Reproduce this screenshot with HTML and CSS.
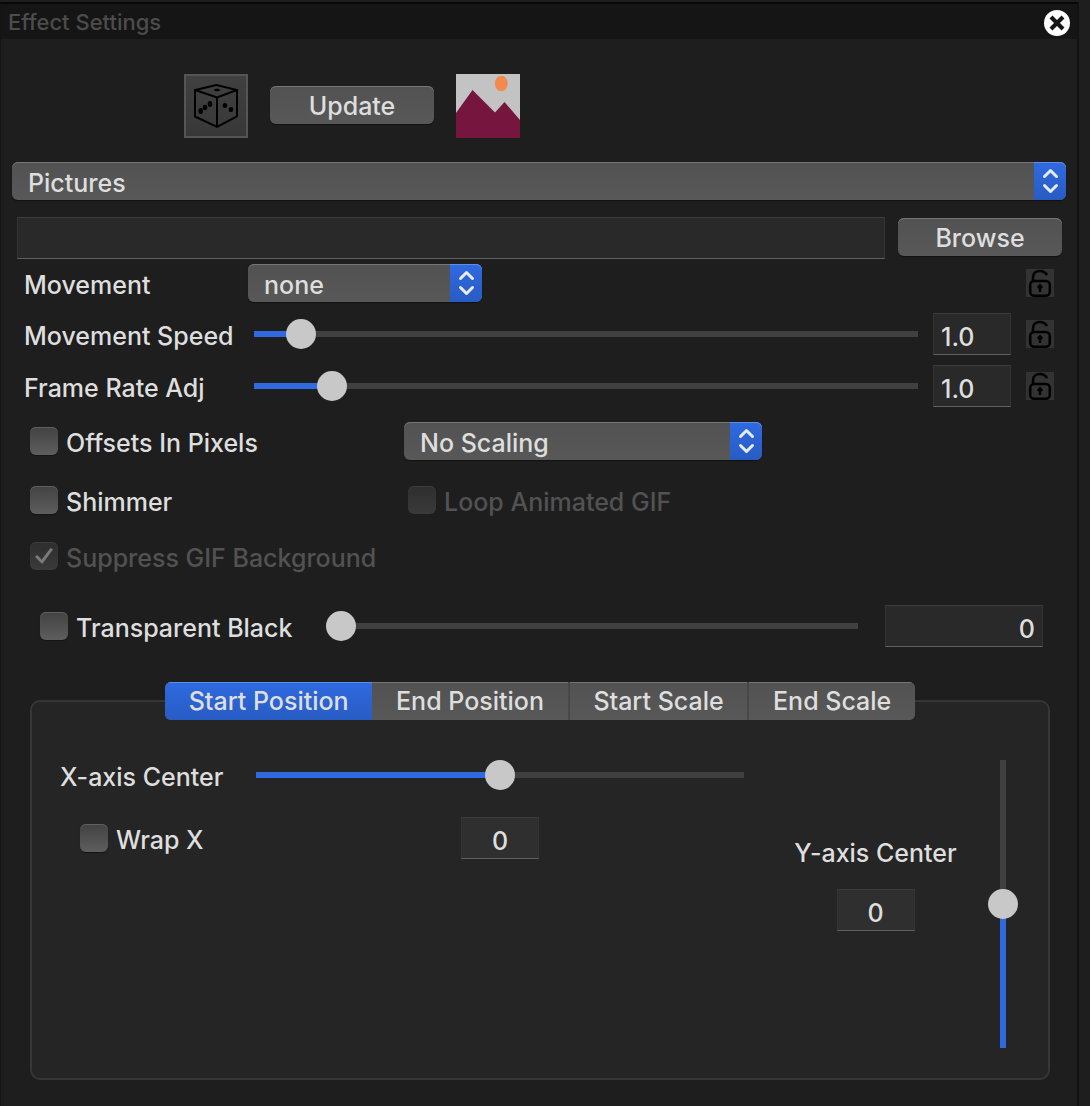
FILE: index.html
```html
<!DOCTYPE html>
<html lang="en">
<head>
<meta charset="utf-8">
<title>Effect Settings</title>
<link rel="stylesheet" href="styles.css">
</head>
<body>
<svg class="sprite" aria-hidden="true">
  <symbol id="chevrons" viewBox="0 0 32 38">
    <path d="M10.500 14.500 16.500 8.500 22.500 14.500M10.500 23.500 16.500 29.500 22.500 23.500" fill="none" stroke="#e6ecf8" stroke-width="3" stroke-linecap="round" stroke-linejoin="round"/>
  </symbol>
  <symbol id="lock" viewBox="0 0 28 28">
    <path d="M7 12V8.500C7 4 10 2 14 2C17.500 2 19.500 3.500 21 6" fill="none" stroke="#000" stroke-width="2.600"/>
    <rect x="4.200" y="12" width="19.600" height="14.700" rx="4" fill="none" stroke="#000" stroke-width="2.600"/>
    <path d="M14 14.500 17 18 15.200 20V23H12.800V20L11 18Z"/>
  </symbol>
</svg>

<main class="window">
  <header class="titlebar">
    <h1 class="title">Effect Settings</h1>
    <button class="close" type="button" aria-label="Close">
      <svg viewBox="0 0 26 26" width="26" height="26"><circle cx="13" cy="13" r="13" fill="#fff"/><path d="M7 7 19 19M19 7 7 19" stroke="#151515" stroke-width="4.200"/></svg>
    </button>
  </header>

  <form class="settings">
    <div class="toolbar">
      <button class="dice" type="button" aria-label="Randomize">
        <svg viewBox="0 0 64 64" width="64" height="64">
          <path d="M32.500 11 11 16V42.500L33 53 53 42.500V16ZM11 16 33 23.500 53 16M33 23.500V53" fill="none" stroke="#000" stroke-width="2"/>
          <ellipse cx="33" cy="16" rx="3" ry="1.200"/>
          <ellipse cx="16.700" cy="37" rx="2.300" ry="2.900"/>
          <ellipse cx="21" cy="33.500" rx="2.300" ry="2.700"/>
          <ellipse cx="26" cy="30" rx="2.300" ry="2.900"/>
          <ellipse cx="41" cy="31.500" rx="2.300" ry="2.600"/>
          <ellipse cx="47" cy="35.500" rx="2.300" ry="2.600"/>
        </svg>
      </button>
      <button class="button" type="button">Update</button>
      <svg class="picture" viewBox="0 0 64 64" width="64" height="64" role="img" aria-label="Pictures effect">
        <path d="M0 0H64V64H0Z" fill="#c3c3c3"/>
        <ellipse cx="45.300" cy="9.500" rx="6.500" ry="7.700" fill="#f28a50"/>
        <path d="M0 39 16.500 16 39 38.500 48.500 28 64 46V64H0Z" fill="#76163f"/>
      </svg>
    </div>

    <div class="popup popup-effect">
      <select aria-label="Effect"><option>Pictures</option></select>
      <svg><use href="#chevrons"/></svg>
    </div>

    <div class="file-row">
      <input class="field" type="text" aria-label="Picture file">
      <button class="button" type="button">Browse</button>
    </div>

    <div class="param param-first">
      <label class="name" for="movement">Movement</label>
      <div class="popup popup-movement">
        <select id="movement"><option>none</option></select>
        <svg><use href="#chevrons"/></svg>
      </div>
      <button class="lock" type="button" aria-label="Lock movement"><svg><use href="#lock"/></svg></button>
    </div>
    <div class="param">
      <label class="name" for="speed">Movement Speed</label>
      <input class="slider" id="speed" type="range" min="0" max="20" value="1" style="--fill: 5%">
      <input class="field field-small" type="text" value="1.0" aria-label="Movement speed value">
      <button class="lock" type="button" aria-label="Lock movement speed"><svg><use href="#lock"/></svg></button>
    </div>
    <div class="param">
      <label class="name" for="rate">Frame Rate Adj</label>
      <input class="slider" id="rate" type="range" min="0" max="10" value="1" style="--fill: 10%">
      <input class="field field-small" type="text" value="1.0" aria-label="Frame rate value">
      <button class="lock" type="button" aria-label="Lock frame rate"><svg><use href="#lock"/></svg></button>
    </div>

    <div class="options">
      <label class="check"><input type="checkbox"><span>Offsets In Pixels</span></label>
      <div class="popup popup-scaling">
        <select aria-label="Scaling"><option>No Scaling</option></select>
        <svg><use href="#chevrons"/></svg>
      </div>
      <label class="check"><input type="checkbox"><span>Shimmer</span></label>
      <label class="check check-loop"><input type="checkbox" disabled><span>Loop Animated GIF</span></label>
      <label class="check"><input type="checkbox" checked disabled><span>Suppress GIF Background</span></label>
    </div>

    <div class="transparent">
      <label class="check"><input type="checkbox"><span>Transparent Black</span></label>
      <input class="slider" type="range" min="0" max="300" value="0" style="--fill: 0%" aria-label="Transparent black level">
      <input class="field field-wide" type="text" value="0" aria-label="Transparent black value">
    </div>

    <section class="panel">
      <div class="tabs" role="tablist">
        <button class="tab tab-active" type="button" role="tab" aria-selected="true">Start Position</button>
        <button class="tab" type="button" role="tab" aria-selected="false">End Position</button>
        <button class="tab" type="button" role="tab" aria-selected="false">Start Scale</button>
        <button class="tab" type="button" role="tab" aria-selected="false">End Scale</button>
      </div>
      <div class="position">
        <div class="x-axis">
          <label class="name" for="xcenter">X-axis Center</label>
          <input class="slider" id="xcenter" type="range" min="-100" max="100" value="0" style="--fill: 50%">
          <label class="check check-wrap"><input type="checkbox"><span>Wrap X</span></label>
          <input class="field field-center" type="text" value="0" aria-label="X-axis center value">
        </div>
        <div class="y-axis">
          <label class="name" for="ycenter">Y-axis Center</label>
          <input class="field field-center" type="text" value="0" aria-label="Y-axis center value">
        </div>
        <input class="slider slider-vertical" id="ycenter" type="range" min="-100" max="100" value="0" style="--fill: 50%">
      </div>
    </section>
  </form>
</main>
</body>
</html>
```
FILE: styles.css
```css
:root {
  --bg: #1e1e1e;
  --text: #dedede;
  --dim: #525252;
  --blue: #2f6ae0;
  --blue-dark: #285cc4;
  --track: #404040;
  --button: linear-gradient(#525252, #585858);
}

* {
  box-sizing: border-box;
}

body {
  display: flex;
  flex-direction: column;
  margin: 0;
  padding-top: 2px;
  min-height: 100vh;
  background: var(--bg);
  color: var(--text);
  font: 500 25px/30px Inter, "Liberation Sans", sans-serif;
}

input,
select,
button {
  margin: 0;
  padding: 0;
  border: 0;
  color: inherit;
  font: inherit;
}

.sprite {
  display: none;
}

.window {
  flex: 1;
  margin-right: 11px;
  border-top: 2px solid #080808;
  border-left: 1px solid #141414;
  border-right: 2px solid #121212;
}

.titlebar {
  display: flex;
  align-items: center;
  justify-content: space-between;
  height: 35px;
  padding: 0 7px;
  background: #151515;
}

.title {
  margin: 0;
  color: #4c4c4c;
  font-size: 22px;
  font-weight: 500;
}

.close {
  display: flex;
  margin-top: 3px;
  background: none;
}

.settings {
  display: flex;
  flex-direction: column;
  padding: 35px 11px 26px;
}

.toolbar {
  display: flex;
  align-items: center;
  gap: 22px;
  padding-left: 172px;
}

.toolbar .button {
  margin-bottom: 2px;
}

.dice {
  display: flex;
  width: 64px;
  height: 64px;
  background: linear-gradient(#404040, #383838);
  box-shadow: inset 0 0 0 2px #555;
}

.button {
  width: 164px;
  height: 38px;
  padding-top: 2px;
  border-radius: 6px;
  background: var(--button);
  box-shadow: inset 0 1px #767676, 0 1px 1px #111;
}

.popup {
  display: grid;
  height: 38px;
  border-radius: 6px;
  background: var(--button);
  box-shadow: inset 0 1px #767676, 0 1px 1px #111;
}

.popup select {
  grid-area: 1 / 1;
  appearance: none;
  padding: 4px 40px 0 16px;
  background: none;
}

.popup svg {
  grid-area: 1 / 1;
  justify-self: end;
  width: 32px;
  height: 38px;
  border-radius: 0 6px 6px 0;
  background: linear-gradient(var(--blue), var(--blue-dark));
  box-shadow: inset 0 1px #5f8de8;
  pointer-events: none;
}

.popup-effect {
  margin-top: 24px;
}

.file-row {
  display: flex;
  gap: 13px;
  margin-top: 17px;
  padding: 0 4px 0 5px;
}

.field {
  flex: 1;
  min-width: 0;
  height: 42px;
  padding: 6px 7px 0;
  border: 1px solid #343434;
  border-top-color: #3c3c3c;
  border-bottom-color: #606060;
  background: #292929;
}

.file-row .button {
  margin-top: 1px;
}

.param {
  display: flex;
  align-items: center;
  height: 42px;
  margin-top: 10px;
  padding: 0 12px;
}

.param-first {
  height: 40px;
  margin-top: 4px;
}

.name {
  padding-top: 3px;
  white-space: nowrap;
}

.param .name {
  width: 224px;
}

.popup-movement {
  width: 234px;
}

.slider {
  flex: 1;
  min-width: 0;
  height: 30px;
  appearance: none;
  background: linear-gradient(90deg, var(--blue) var(--fill), var(--track) var(--fill)) center / 100% 6px no-repeat;
}

.slider::-webkit-slider-runnable-track {
  height: 30px;
}

.slider::-webkit-slider-thumb {
  appearance: none;
  width: 30px;
  height: 30px;
  border-radius: 50%;
  background: #c8c8c8;
}

.param .slider {
  margin: 0 15px 0 6px;
}

.field-small {
  flex: none;
  width: 78px;
}

.lock {
  display: flex;
  margin-left: auto;
  background: #333;
}

.field-small + .lock {
  margin-left: 15px;
}

.lock svg {
  width: 28px;
  height: 28px;
}

.options {
  display: grid;
  grid-template-columns: 374px 358px;
  grid-template-rows: 38px 44px 32px;
  row-gap: 18px;
  align-items: center;
  margin-top: 15px;
  padding-left: 18px;
}

.check {
  display: flex;
  align-items: center;
  gap: 8px;
  white-space: nowrap;
}

.check span {
  padding-top: 3px;
}

.check input {
  appearance: none;
  flex: none;
  width: 28px;
  height: 28px;
  border-radius: 6px;
  background: linear-gradient(#424242, #5e5e5e);
  box-shadow: inset 0 1px #606060, 0 1px 1px #141414;
}

.check input:disabled {
  background: linear-gradient(#2e2e2e, #3a3a3a);
  box-shadow: inset 0 1px #3c3c3c;
}

.check input:disabled + span {
  color: var(--dim);
}

.check input:checked {
  display: grid;
  place-items: center;
}

.check input:checked::before {
  content: "";
  width: 18px;
  height: 16px;
  background: #7a7a7a;
  clip-path: polygon(0 56%, 13% 44%, 37% 74%, 86% 0, 100% 10%, 40% 100%);
}

.check-loop {
  padding-left: 4px;
}

.transparent {
  display: flex;
  align-items: center;
  margin-top: 33px;
  padding: 0 23px 0 28px;
}

.transparent .check {
  width: 286px;
}

.field-wide {
  flex: none;
  width: 158px;
  margin-left: 27px;
  text-align: right;
}

.panel {
  min-height: 380px;
  margin: 53px 16px 0 18px;
  border: 2px solid #363636;
  border-radius: 10px;
  background: #252525;
}

.tabs {
  display: flex;
  width: 750px;
  max-width: 100%;
  height: 38px;
  margin: -20px auto 0;
  border-radius: 6px;
  overflow: hidden;
  background: var(--button);
}

.tab {
  flex: auto;
  border-left: 2px solid #484848;
  background: var(--button);
  box-shadow: inset 0 1px #767676;
}

.tab-active,
.tab-active + .tab {
  border-left: 0;
}

.tab-active {
  background: linear-gradient(var(--blue), var(--blue-dark));
  box-shadow: inset 0 1px #5f8de8;
}

.position {
  display: flex;
  padding: 40px 30px 30px 28px;
}

.position .field {
  background: #2f2f2f;
}

.x-axis {
  flex: 1;
  display: grid;
  grid-template-columns: 196px 1fr;
  grid-template-rows: 30px 42px;
  row-gap: 27px;
  align-items: center;
  align-content: start;
}

.x-axis .slider {
  width: 100%;
}

.check-wrap {
  padding-left: 20px;
}

.field-center {
  flex: none;
  width: 78px;
  text-align: center;
}

.x-axis .field-center {
  justify-self: center;
}

.y-axis {
  display: flex;
  flex-direction: column;
  align-items: center;
  gap: 21px;
  width: 163px;
  margin: 75px 31px 0 50px;
}

.slider-vertical {
  flex: none;
  width: 30px;
  height: 288px;
  writing-mode: vertical-lr;
  direction: rtl;
  background: linear-gradient(0deg, var(--blue) var(--fill), var(--track) var(--fill)) center / 6px 100% no-repeat;
}

.slider-vertical::-webkit-slider-runnable-track {
  width: 30px;
  height: 100%;
}
```
